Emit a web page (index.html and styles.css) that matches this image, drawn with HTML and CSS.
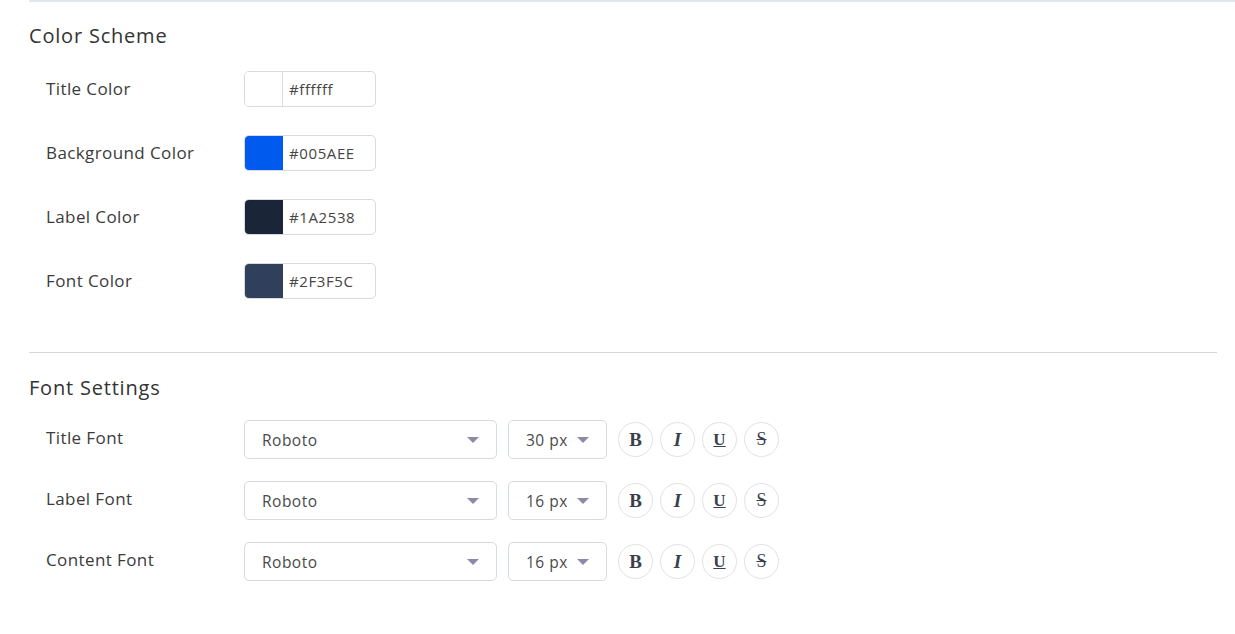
FILE: index.html
```html
<!DOCTYPE html>
<html lang="en">
<head>
    <meta charset="UTF-8">
    <title>Form Settings</title>
    <link rel="stylesheet" href="styles.css">
</head>
<body>
    <div class="settings">
        <section class="group group-top">
            <h2>Color Scheme</h2>
            <div class="color-row">
                <label>Title Color</label>
                <div class="color-input">
                    <span class="swatch swatch-white"></span>
                    <span class="hex">#ffffff</span>
                </div>
            </div>
            <div class="color-row">
                <label>Background Color</label>
                <div class="color-input">
                    <span class="swatch" style="background:#005AEE"></span>
                    <span class="hex">#005AEE</span>
                </div>
            </div>
            <div class="color-row">
                <label>Label Color</label>
                <div class="color-input">
                    <span class="swatch" style="background:#1A2538"></span>
                    <span class="hex">#1A2538</span>
                </div>
            </div>
            <div class="color-row">
                <label>Font Color</label>
                <div class="color-input">
                    <span class="swatch" style="background:#2F3F5C"></span>
                    <span class="hex">#2F3F5C</span>
                </div>
            </div>
        </section>

        <section class="group">
            <h2>Font Settings</h2>
            <div class="font-row">
                <label>Title Font</label>
                <div class="select select-family"><span>Roboto</span><i class="caret"></i></div>
                <div class="select select-size"><span>30 px</span><i class="caret"></i></div>
                <div class="styles">
                    <button class="b">B</button>
                    <button class="i">I</button>
                    <button class="u">U</button>
                    <button class="s">S</button>
                </div>
            </div>
            <div class="font-row">
                <label>Label Font</label>
                <div class="select select-family"><span>Roboto</span><i class="caret"></i></div>
                <div class="select select-size"><span>16 px</span><i class="caret"></i></div>
                <div class="styles">
                    <button class="b">B</button>
                    <button class="i">I</button>
                    <button class="u">U</button>
                    <button class="s">S</button>
                </div>
            </div>
            <div class="font-row">
                <label>Content Font</label>
                <div class="select select-family"><span>Roboto</span><i class="caret"></i></div>
                <div class="select select-size"><span>16 px</span><i class="caret"></i></div>
                <div class="styles">
                    <button class="b">B</button>
                    <button class="i">I</button>
                    <button class="u">U</button>
                    <button class="s">S</button>
                </div>
            </div>
        </section>
    </div>
</body>
</html>
```

FILE: styles.css
```css
body, html {
    margin: 0;
    padding: 0;
    background: #fff;
    font-family: "Open Sans", "Noto Sans", sans-serif;
    color: #3b3b3b;
}

.settings {
    padding-left: 29px;
}

.group {
    border-top: 1px solid #d3d7dd;
    margin-right: 18px;
    padding-top: 23px;
}

.group-top {
    border-top: 2px solid #e2e6ee;
    margin-right: 0;
    padding-top: 22px;
    padding-bottom: 53px;
}

.group h2 {
    margin: 0 0 23px;
    font-size: 20px;
    line-height: 24px;
    font-weight: 500;
    letter-spacing: 0.8px;
    color: #333;
}

.group:not(.group-top) h2 {
    margin-bottom: 20px;
}

.color-row, .font-row {
    display: flex;
    align-items: center;
    padding-left: 17px;
}

.color-row {
    margin-bottom: 28px;
}

.color-row:last-child {
    margin-bottom: 0;
}

.font-row {
    margin-bottom: 22px;
}

.color-row label, .font-row label {
    width: 198px;
    font-size: 17px;
    letter-spacing: 0.4px;
    color: #3b3b3b;
    margin-top: -2px;
}

.font-row label {
    margin-top: -5px;
}

.color-input {
    width: 130px;
    height: 34px;
    border: 1px solid #d6dae1;
    border-radius: 5px;
    display: flex;
    align-items: center;
    overflow: hidden;
}

.swatch {
    width: 38px;
    height: 100%;
    flex: none;
}

.swatch-white {
    background: #fff;
    border-right: 1px solid #d6dae1;
    width: 37px;
}

.hex {
    padding-left: 6px;
    font-size: 15px;
    letter-spacing: 0.6px;
    color: #454545;
}

.select {
    height: 37px;
    border: 1px solid #d6dae1;
    border-radius: 5px;
    display: flex;
    align-items: center;
    justify-content: space-between;
    box-sizing: content-box;
    font-size: 15.5px;
    letter-spacing: 0.5px;
    color: #4a4a4a;
}

.select-family {
    width: 217px;
    padding: 0 17px;
}

.select-size {
    width: 63px;
    padding: 0 17px;
    margin-left: 11px;
}

.caret {
    width: 0;
    height: 0;
    border-left: 6px solid transparent;
    border-right: 6px solid transparent;
    border-top: 6px solid #8e89a5;
    margin-top: 1px;
}

.styles {
    display: flex;
    gap: 7px;
    margin-left: 11px;
}

.styles button {
    width: 35px;
    height: 35px;
    border: 1px solid #dfe2e8;
    border-radius: 50%;
    background: #fff;
    padding: 0;
    font-family: "Liberation Serif", serif;
    font-size: 19px;
    color: #3a3f4e;
}

.styles .b {
    font-weight: bold;
}

.styles .i {
    font-style: italic;
    font-weight: bold;
}

.styles .u {
    text-decoration: underline;
    font-weight: bold;
    font-size: 17px;
}

.styles .s {
    text-decoration: line-through;
    font-size: 18px;
}
```
